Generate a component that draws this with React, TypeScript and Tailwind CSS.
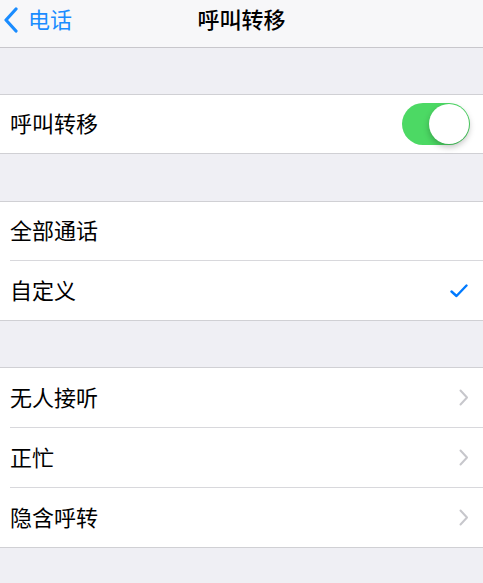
import React, { useState } from 'react';

const font = { fontFamily: '"Noto Sans CJK SC", "Noto Sans", sans-serif' };

const Chevron = () => (
    <svg width="10" height="17" viewBox="0 0 10 17" className="mr-[14px] mt-[4px]">
        <path d="M1.5 1.5 L8 8.5 L1.5 15.5" fill="none" stroke="#c7c7cc" strokeWidth="2" strokeLinecap="round" strokeLinejoin="round" />
    </svg>
);

const Check = () => (
    <svg width="18" height="14" viewBox="0 0 18 14" className="mr-[15px] mt-[4px]">
        <path d="M1.5 7.5 L6.5 12 L16.5 1.5" fill="none" stroke="#007aff" strokeWidth="2.4" strokeLinecap="round" strokeLinejoin="round" />
    </svg>
);

const Toggle = ({ on, onChange }: { on: boolean; onChange: () => void }) => (
    <button
        onClick={onChange}
        className={`relative w-[68px] h-[42px] rounded-full mr-[13px] transition ${on ? 'bg-[#4cd964]' : 'bg-[#e5e5ea]'}`}
    >
        <span
            className={`absolute top-[1px] w-[40px] h-[40px] rounded-full bg-white shadow-[0_3px_6px_rgba(0,0,0,0.25)] transition-all ${on ? 'left-[27px]' : 'left-[1px]'}`}
        />
    </button>
);

const Row = ({ label, last, tall, children }: { label: string; last?: boolean; tall?: boolean; children?: React.ReactNode }) => (
    <div className={`${tall ? 'h-[60px]' : 'h-[59px]'} flex flex-col`}>
        <div className="flex-1 flex items-center justify-between pl-[10px] pb-[4px]">
            <span className="text-[22px] leading-none text-black">{label}</span>
            {children}
        </div>
        {!last && <div className="ml-[10px] h-px bg-[#d8d8dc]" />}
    </div>
);

const Group = ({ children }: { children: React.ReactNode }) => (
    <div className="bg-white border-y border-[#d0d0d4]">{children}</div>
);

export default function App() {
    const [forwarding, setForwarding] = useState(true);

    return (
        <div className="w-[483px] h-[583px] bg-[#efeff4] overflow-hidden" style={font}>
            {/* Navigation bar */}
            <div className="relative h-[48px] bg-[#f7f7f9] border-b border-[#c8c7cc] flex items-center pb-[11px]">
                <div className="flex items-center text-[#1a8cff] pl-[3px]">
                    <svg width="16" height="26" viewBox="0 0 16 26" className="mt-[3px]">
                        <path d="M13 2 L3 13 L13 24" fill="none" stroke="#1a8cff" strokeWidth="3.2" strokeLinecap="round" strokeLinejoin="round" />
                    </svg>
                    <span className="ml-[9px] text-[22px] leading-none">电话</span>
                </div>
                <span className="absolute left-1/2 -translate-x-1/2 text-[22px] font-medium text-black leading-none">呼叫转移</span>
            </div>

            <div className="h-[46px]" />
            <Group>
                <div className="h-[58px] flex items-center justify-between pl-[10px]">
                    <span className="text-[22px] leading-none text-black pb-[4px]">呼叫转移</span>
                    <Toggle on={forwarding} onChange={() => setForwarding(!forwarding)} />
                </div>
            </Group>

            <div className="h-[47px]" />
            <Group>
                <Row label="全部通话" />
                <Row label="自定义" last>
                    <Check />
                </Row>
            </Group>

            <div className="h-[46px]" />
            <Group>
                <Row label="无人接听" tall><Chevron /></Row>
                <Row label="正忙" tall><Chevron /></Row>
                <Row label="隐含呼转" last><Chevron /></Row>
            </Group>
        </div>
    );
}
